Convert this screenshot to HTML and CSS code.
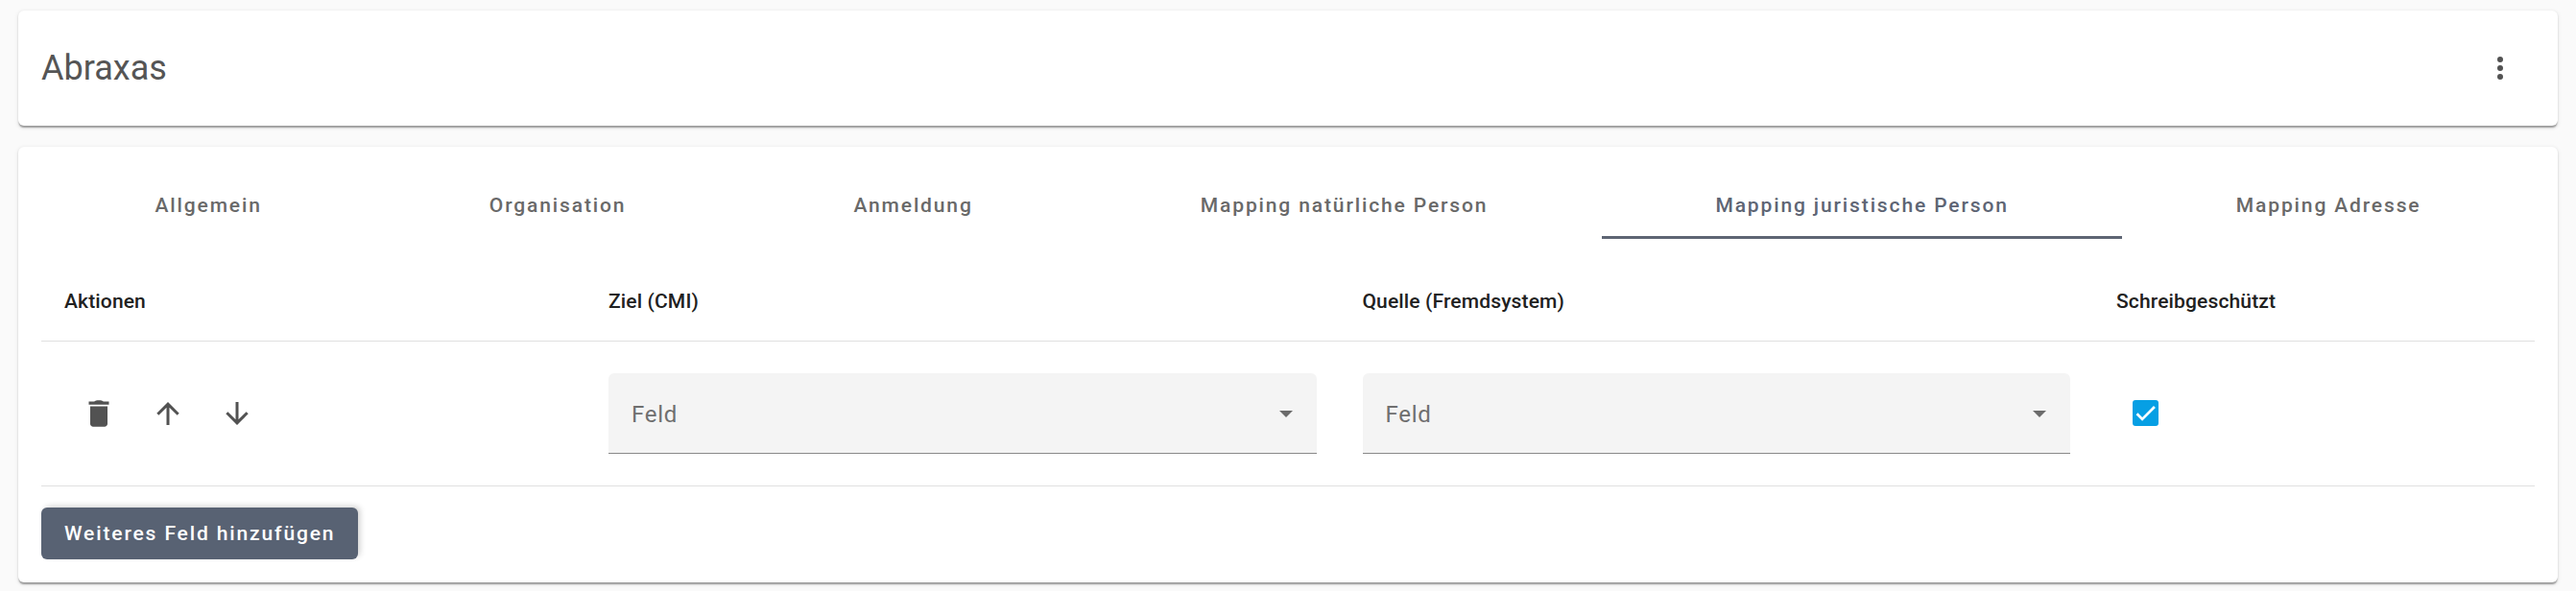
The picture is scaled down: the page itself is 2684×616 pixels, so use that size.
FILE: index.html
```html
<!DOCTYPE html>
<html lang="de">
<head>
    <meta charset="UTF-8">
    <meta name="viewport" content="width=device-width, initial-scale=1.0">
    <title>Abraxas</title>
    <link rel="stylesheet" href="styles.css">
</head>
<body>
    <!-- Header -->
    <div class="card header">
        <h1>Abraxas</h1>
        <button class="icon-btn" aria-label="Menü">
            <svg viewBox="0 0 24 24"><path d="M12 16a2 2 0 1 1 0 4 2 2 0 0 1 0-4m0-6a2 2 0 1 1 0 4 2 2 0 0 1 0-4m0-6a2 2 0 1 1 0 4 2 2 0 0 1 0-4z"/></svg>
        </button>
    </div>

    <div class="card content">
        <div class="tabs">
            <a class="tab">Allgemein</a>
            <a class="tab">Organisation</a>
            <a class="tab">Anmeldung</a>
            <a class="tab">Mapping natürliche Person</a>
            <a class="tab active">Mapping juristische Person</a>
            <a class="tab">Mapping Adresse</a>
        </div>

        <!-- Mapping Table -->
        <table class="mapping-table">
            <thead>
                <tr>
                    <th class="col-actions">Aktionen</th>
                    <th class="col-field">Ziel (CMI)</th>
                    <th class="col-field">Quelle (Fremdsystem)</th>
                    <th>Schreibgeschützt</th>
                </tr>
            </thead>
            <tbody>
                <tr>
                    <td>
                        <div class="actions">
                            <button class="icon-btn" aria-label="Löschen">
                                <svg viewBox="0 0 24 24"><path d="M6 19.200c0 1.100.9 2 2 2h8c1.100 0 2-.9 2-2V7H6zM19 3.700h-3.800c-.6-.6-1.700-.8-3.200-.8s-2.600.2-3.200.8H5v2.200h14z"/></svg>
                            </button>
                            <button class="icon-btn" aria-label="Nach oben">
                                <svg viewBox="0 0 24 24"><path class="line" d="M12 20V5.500M4.900 12.500L12 5.400l7.100 7.100"/></svg>
                            </button>
                            <button class="icon-btn" aria-label="Nach unten">
                                <svg viewBox="0 0 24 24"><path class="line" d="M12 4v14.500M4.900 11.500L12 18.600l7.100-7.100"/></svg>
                            </button>
                        </div>
                    </td>
                    <td>
                        <div class="select"><span>Feld</span><i class="arrow"></i></div>
                    </td>
                    <td>
                        <div class="select"><span>Feld</span><i class="arrow"></i></div>
                    </td>
                    <td>
                        <div class="checkbox">
                            <svg viewBox="0 0 24 24"><path d="M1.730 12.910L8.100 19.280 22.790 4.590"/></svg>
                        </div>
                    </td>
                </tr>
            </tbody>
        </table>

        <button class="btn-add">Weiteres Feld hinzufügen</button>
    </div>
</body>
</html>
```
FILE: styles.css
```css
/* General Page Styling */
* {
    box-sizing: border-box;
}

body {
    font-family: Roboto, sans-serif;
    margin: 0;
    padding: 11px 19px 9px;
    background-color: #fafafa;
}

.card {
    background-color: #fff;
    border-radius: 6px;
    box-shadow: 0 3px 1.5px -1.5px rgba(0, 0, 0, 0.2), 0 1.5px 1.5px 0 rgba(0, 0, 0, 0.14), 0 1.5px 4.5px 0 rgba(0, 0, 0, 0.12);
}

/* Header */
.header {
    display: flex;
    align-items: center;
    justify-content: space-between;
    height: 120px;
    padding: 0 24px;
    margin-bottom: 22px;
}

.header h1 {
    margin: 0;
    font-size: 36px;
    font-weight: 400;
    color: #555;
}

.icon-btn {
    display: flex;
    align-items: center;
    justify-content: center;
    width: 72px;
    height: 72px;
    padding: 0;
    border: none;
    background: none;
    cursor: pointer;
}

.icon-btn svg {
    width: 36px;
    height: 36px;
    fill: #525252;
}

.icon-btn .line {
    fill: none;
    stroke: #525252;
    stroke-width: 2;
}

/* Content Area */
.content {
    height: 454px;
    padding: 24px;
}

/* Tabs */
.tabs {
    display: flex;
    height: 72px;
}

.tab {
    flex: 1 0 auto;
    height: 72px;
    padding: 1px 36px 0;
    line-height: 72px;
    text-align: center;
    font-size: 21px;
    font-weight: 500;
    letter-spacing: 1.875px;
    color: #696969;
    cursor: pointer;
}

.tab.active {
    color: #5e6574;
    box-shadow: inset 0 -3px #5e6574;
}

/* Table Styling */
.mapping-table {
    width: 100%;
    margin-top: 22px;
    table-layout: fixed;
    border-collapse: separate;
    border-spacing: 0;
}

.mapping-table th,
.mapping-table td {
    padding: 0 24px;
    border-bottom: 1px solid #e0e0e0;
    text-align: left;
}

.mapping-table th {
    height: 85px;
    padding-top: 2px;
    font-size: 21px;
    font-weight: 500;
    letter-spacing: 0.15px;
    color: #212121;
}

.mapping-table td {
    height: 151px;
}

.col-actions {
    width: 567px;
}

.col-field {
    width: 785.5px;
}

.actions {
    display: flex;
}

.select {
    display: flex;
    align-items: center;
    justify-content: space-between;
    height: 84px;
    padding: 2px 25px 0 24px;
    background-color: #f4f4f4;
    border-bottom: 1px solid #8a8a8a;
    border-radius: 6px 6px 0 0;
    font-size: 24px;
    letter-spacing: 0.75px;
    color: #6f6f6f;
}

.arrow {
    border-left: 7.5px solid transparent;
    border-right: 7.5px solid transparent;
    border-top: 7.5px solid #6b6b6b;
}

.checkbox {
    width: 27px;
    height: 27px;
    padding: 3px;
    margin-left: 17px;
    margin-bottom: 1px;
    border-radius: 3px;
    background-color: #069fe4;
}

.checkbox svg {
    display: block;
    width: 21px;
    height: 21px;
    fill: none;
    stroke: #fff;
    stroke-width: 3.12;
}

/* Buttons */
.btn-add {
    display: block;
    height: 54px;
    padding: 0 24px;
    margin-top: 22px;
    border: none;
    border-radius: 6px;
    background-color: #586273;
    box-shadow: 3px -2px 6px -1px rgba(0, 0, 0, 0.2);
    font-family: Roboto, sans-serif;
    font-size: 21px;
    font-weight: 500;
    letter-spacing: 1.875px;
    color: #fff;
    cursor: pointer;
}
```
